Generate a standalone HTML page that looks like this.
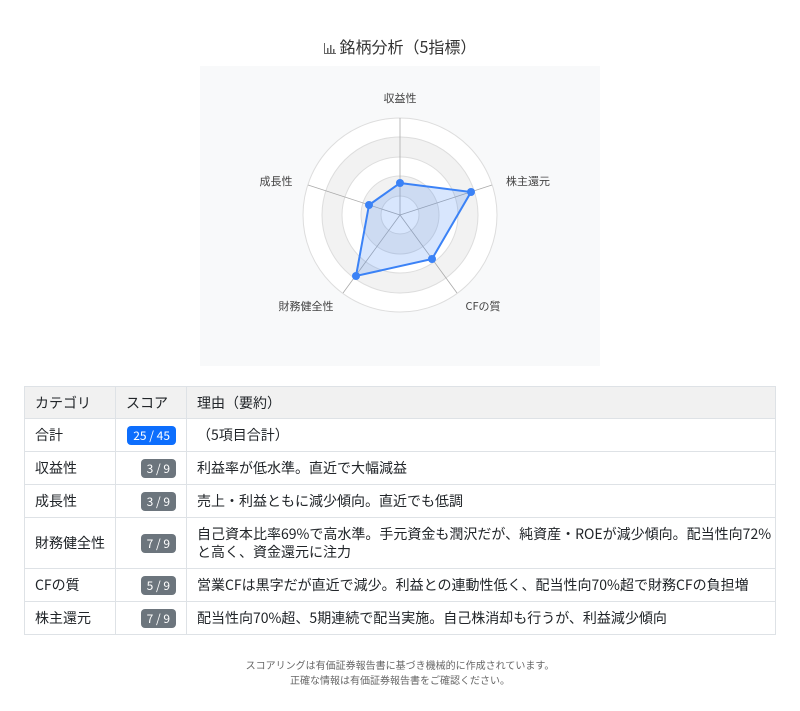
<!DOCTYPE html>
<html><head><meta charset="utf-8"><style>
*{margin:0;padding:0;box-sizing:border-box}
body{width:800px;height:711px;background:#fff;font-family:"Noto Sans CJK JP","Liberation Sans",sans-serif;color:#212529;position:relative}
.title{position:absolute;top:35px;left:0;width:800px;text-align:center;font-size:16px;line-height:22px;color:#333}
.panel{position:absolute;left:200px;top:66px;width:400px;height:300px;background:#f8f9fa}
table{position:absolute;left:24px;top:386px;width:752px;border-collapse:collapse;font-size:14px;line-height:18px;table-layout:fixed}
td,th{border:1px solid #dee2e6;padding:0 10px;text-align:left;font-weight:normal;vertical-align:middle}
th{background:#f1f1f1;height:32px}
td{height:33px}
.b{display:inline-block;color:#fff;font-size:12px;padding:1px 6px;border-radius:4px;line-height:17px;background:#6c757d}
.s{text-align:right}
.foot{position:absolute;top:657px;left:0;width:800px;text-align:center;font-size:10px;color:#666;line-height:15px}
</style></head><body>
<div class="title"><svg width="12" height="12" style="vertical-align:-1px;margin-right:4px"><g fill="#666"><rect x="0" y="1" width="1" height="11"/><rect x="0" y="11" width="12" height="1"/><rect x="3" y="6" width="1.5" height="5"/><rect x="6" y="3" width="1.5" height="8"/><rect x="9" y="7" width="1.5" height="4"/></g></svg>銘柄分析（5指標）</div>
<div class="panel"></div>
<svg style="position:absolute;left:0;top:0" width="800" height="380">
<circle cx="400" cy="215" r="97" fill="#fff" stroke="#ddd"/>
<circle cx="400" cy="215" r="78" fill="#f2f2f2" stroke="#ddd"/>
<circle cx="400" cy="215" r="58" fill="#fff" stroke="#ddd"/>
<circle cx="400" cy="215" r="39" fill="#f2f2f2" stroke="#ddd"/>
<circle cx="400" cy="215" r="19" fill="#fff" stroke="#ddd"/>
<g stroke="#aaa" stroke-width="0.8">
<line x1="400" y1="215" x2="400" y2="118"/>
<line x1="400" y1="215" x2="492" y2="185"/>
<line x1="400" y1="215" x2="457" y2="293"/>
<line x1="400" y1="215" x2="343" y2="293"/>
<line x1="400" y1="215" x2="308" y2="185"/>
</g>
<polygon points="400,183 471,192 432,259 356,276 369,205" fill="rgba(59,130,246,0.2)" stroke="#3b82f6" stroke-width="2"/>
<g fill="#3b82f6"><circle cx="400" cy="183" r="4"/><circle cx="471" cy="192" r="4"/><circle cx="432" cy="259" r="4"/><circle cx="356" cy="276" r="4"/><circle cx="369" cy="205" r="4"/></g>
<g font-size="11" fill="#444" text-anchor="middle" font-family="Noto Sans CJK JP,Liberation Sans,sans-serif">
<text x="400" y="102">収益性</text>
<text x="528" y="185">株主還元</text>
<text x="483" y="310">CFの質</text>
<text x="306" y="310">財務健全性</text>
<text x="276" y="185">成長性</text>
</g>
</svg>
<table>
<colgroup><col style="width:91px"><col style="width:71px"><col></colgroup>
<tr><th>カテゴリ</th><th>スコア</th><th>理由（要約）</th></tr>
<tr><td>合計</td><td class="s"><span class="b" style="background:#0d6efd">25 / 45</span></td><td>（5項目合計）</td></tr>
<tr><td>収益性</td><td class="s"><span class="b">3 / 9</span></td><td>利益率が低水準。直近で大幅減益</td></tr>
<tr><td>成長性</td><td class="s"><span class="b">3 / 9</span></td><td>売上・利益ともに減少傾向。直近でも低調</td></tr>
<tr><td style="height:51px">財務健全性</td><td class="s"><span class="b">7 / 9</span></td><td style="line-height:18px;padding-right:0;white-space:nowrap;overflow:hidden">自己資本比率69%で高水準。手元資金も潤沢だが、純資産・ROEが減少傾向。配当性向72%<br>と高く、資金還元に注力</td></tr>
<tr><td>CFの質</td><td class="s"><span class="b">5 / 9</span></td><td>営業CFは黒字だが直近で減少。利益との連動性低く、配当性向70%超で財務CFの負担増</td></tr>
<tr><td>株主還元</td><td class="s"><span class="b">7 / 9</span></td><td>配当性向70%超、5期連続で配当実施。自己株消却も行うが、利益減少傾向</td></tr>
</table>
<div class="foot">スコアリングは有価証券報告書に基づき機械的に作成されています。<br>正確な情報は有価証券報告書をご確認ください。</div>
</body></html>
